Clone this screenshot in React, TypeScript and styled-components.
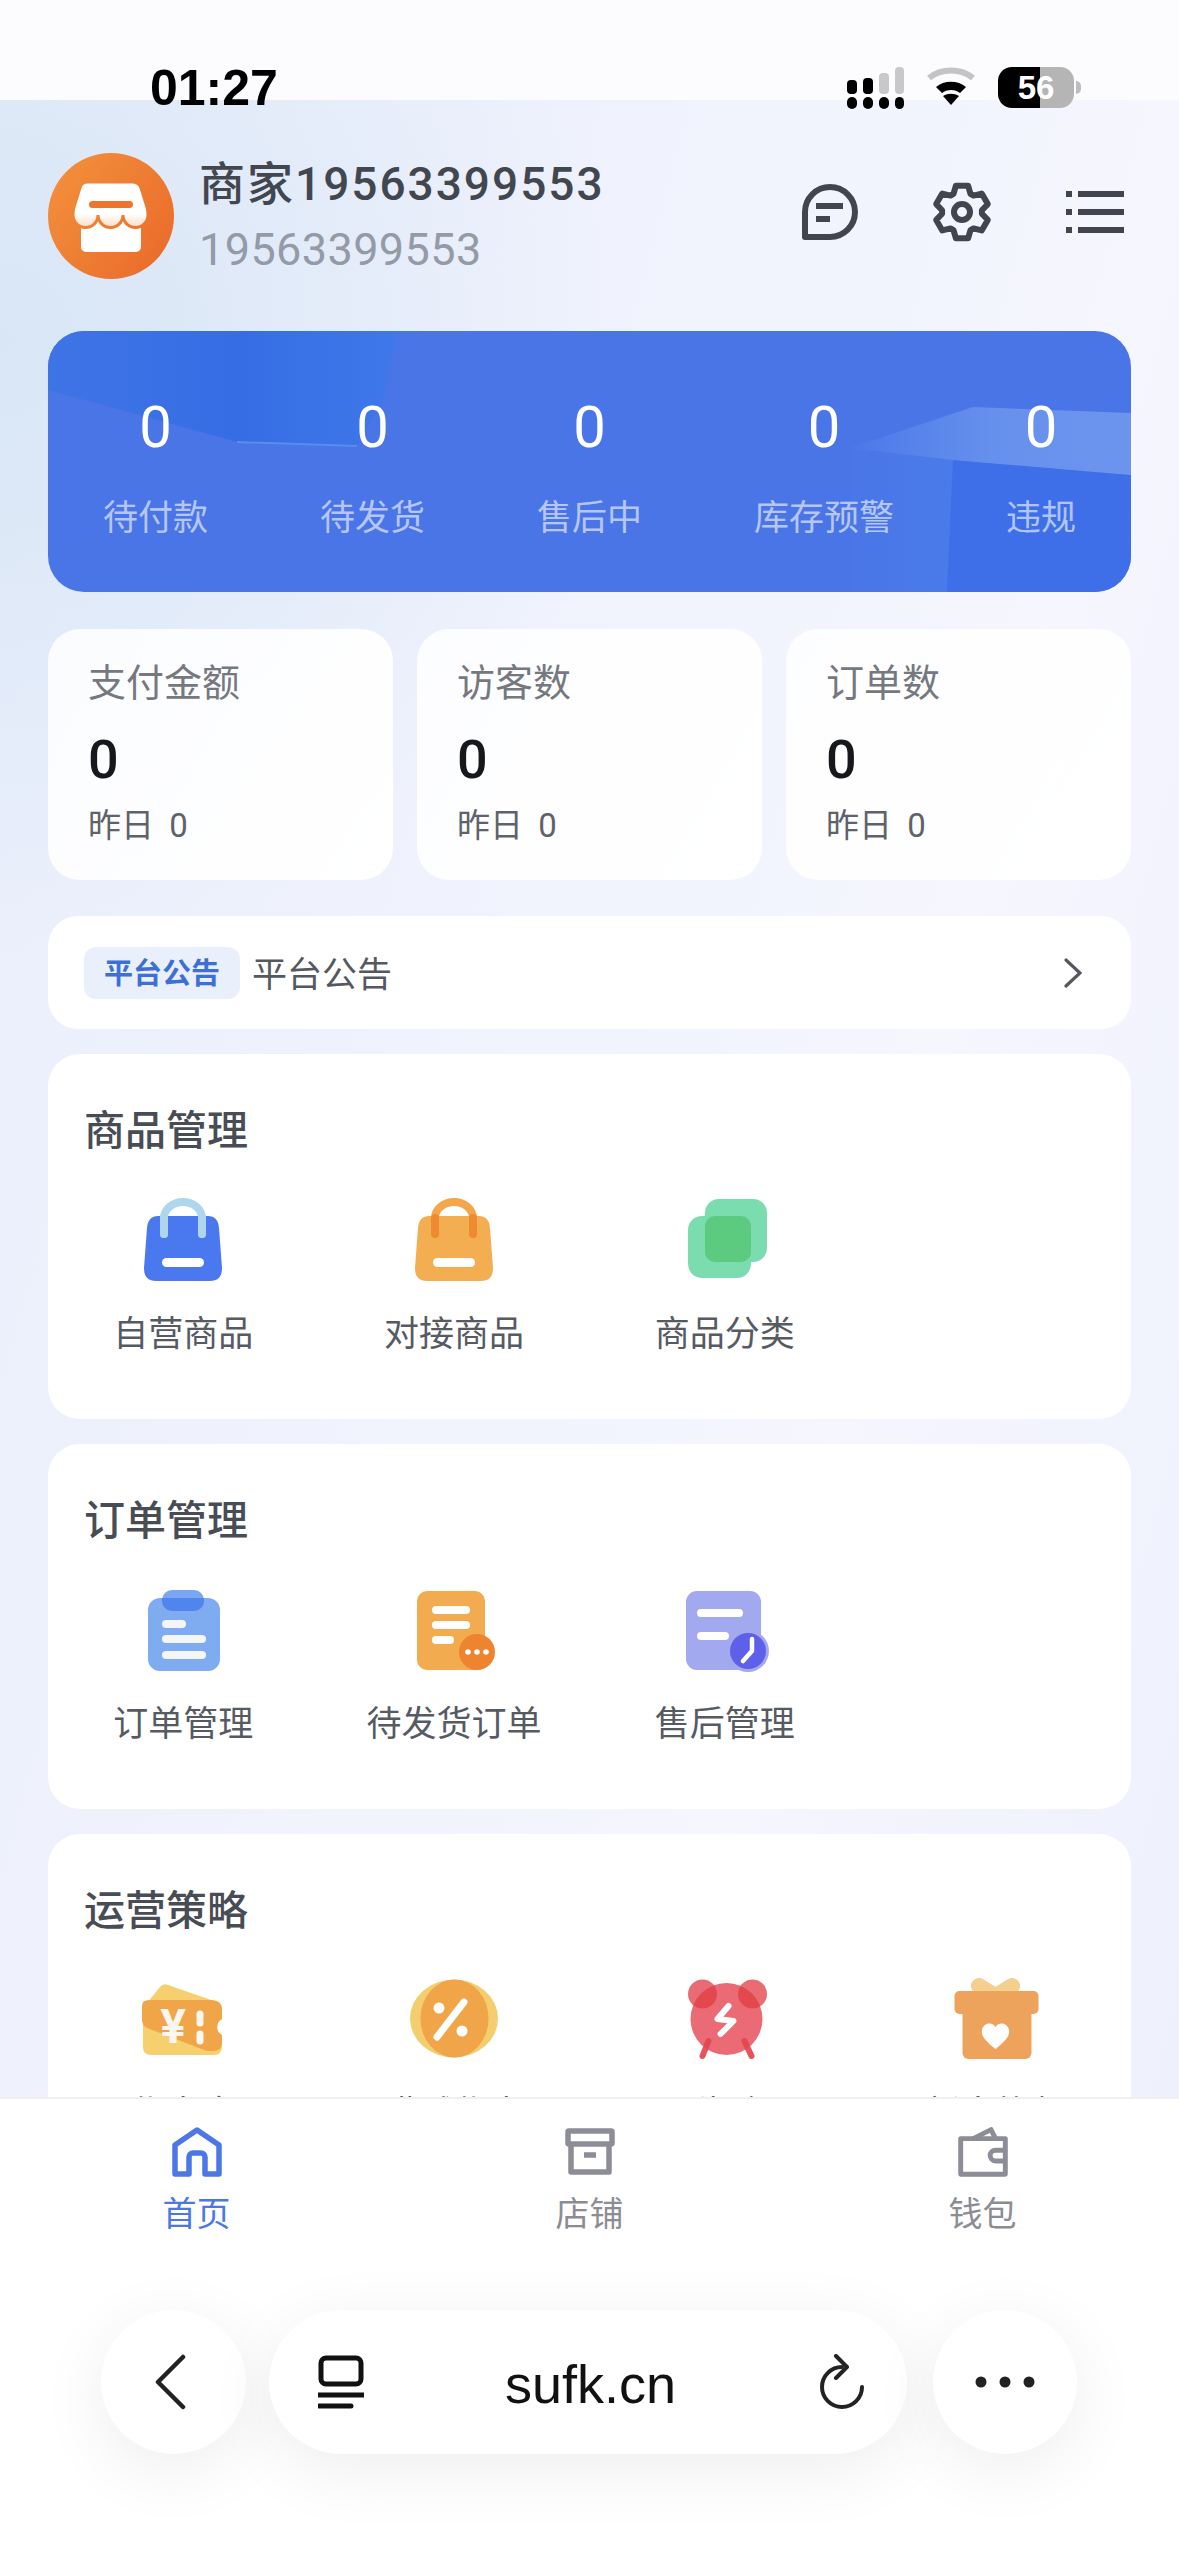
import React from 'react';
import styled, { createGlobalStyle } from 'styled-components';

const GlobalStyle = createGlobalStyle`
  html, body {
    margin: 0;
    padding: 0;
    background: #fff;
  }
  * {
    box-sizing: border-box;
  }
`;

const Page = styled.div`
  width: 1179px;
  height: 2556px;
  display: flex;
  flex-direction: column;
  overflow: hidden;
  font-family: Roboto, 'Noto Sans CJK SC', sans-serif;
`;

const Scroller = styled.div`
  height: 2097px;
  flex-shrink: 0;
  overflow: hidden;
  padding: 0 48px;
  background:
    linear-gradient(#fcfcfe 100px, transparent 100px),
    radial-gradient(ellipse 620px 620px at 0 340px, #d8e6f6, transparent),
    linear-gradient(105deg, #e9eefb, #f5f6fe 70%, #eef0fc);
`;

const StatusBar = styled.div`
  height: 153px;
  margin: 0 -48px;
  padding: 61px 105px 0 150px;
  display: flex;
  justify-content: space-between;
  align-items: flex-start;
`;

const Time = styled.div`
  font-family: 'Liberation Sans', sans-serif;
  font-size: 50px;
  line-height: 54px;
  font-weight: 700;
  color: #000;
`;

const StatusIcons = styled.div`
  display: flex;
  align-items: flex-start;
  gap: 22px;
  margin-top: 6px;
`;

const Battery = styled.div`
  width: 76px;
  height: 41px;
  border-radius: 14px;
  background: linear-gradient(90deg, #000 55%, #b5b5b5 55%);
  color: #fff;
  font-family: 'Liberation Sans', sans-serif;
  font-size: 33px;
  line-height: 41px;
  font-weight: 700;
  text-align: center;
  position: relative;

  &::after {
    content: '';
    position: absolute;
    right: -7px;
    top: 14px;
    width: 5px;
    height: 13px;
    border-radius: 0 6px 6px 0;
    background: #bdbdbd;
  }
`;

const Header = styled.div`
  display: flex;
  align-items: center;
  height: 126px;
`;

const Avatar = styled.svg`
  width: 126px;
  height: 126px;
  flex-shrink: 0;
`;

const Who = styled.div`
  margin-left: 25px;
  flex: 1;
`;

const Name = styled.div`
  font-size: 46px;
  line-height: 52px;
  font-weight: 500;
  letter-spacing: 2px;
  color: #42464f;
`;

const Phone = styled.div`
  margin-top: 15px;
  font-size: 45px;
  line-height: 50px;
  letter-spacing: 0.4px;
  color: #949aa6;
`;

const HeaderActions = styled.div`
  display: flex;
  align-items: center;
  gap: 74px;
  margin-right: 7px;
  padding-bottom: 9px;
`;

const BlueCard = styled.div`
  position: relative;
  margin-top: 52px;
  height: 261px;
  border-radius: 36px;
  overflow: hidden;
  background: #4a75e6;
`;

const BlueArt = styled.svg`
  position: absolute;
  inset: 0;
  width: 100%;
  height: 100%;
`;

const BlueRow = styled.div`
  position: relative;
  display: flex;
  justify-content: space-between;
  padding: 66px 55px 0;
`;

const BlueItem = styled.div`
  display: flex;
  flex-direction: column;
  align-items: center;
  gap: 37px;
`;

const BlueValue = styled.div`
  font-size: 58px;
  line-height: 60px;
  color: #fff;
`;

const BlueLabel = styled.div`
  font-size: 35px;
  line-height: 50px;
  color: rgba(255, 255, 255, 0.6);
`;

const StatGrid = styled.div`
  display: grid;
  grid-template-columns: repeat(3, 1fr);
  gap: 24px;
  margin-top: 37px;
`;

const StatCard = styled.div`
  height: 251px;
  padding: 29px 0 0 40px;
  border-radius: 32px;
  background: linear-gradient(120deg, rgba(255, 255, 255, 0.86), rgba(255, 255, 255, 0.98));
`;

const StatLabel = styled.div`
  font-size: 38px;
  line-height: 50px;
  color: #75787f;
`;

const StatValue = styled.div`
  margin-top: 22px;
  font-size: 54px;
  line-height: 60px;
  font-weight: 500;
  color: #17181c;
`;

const StatSub = styled.div`
  margin-top: 14px;
  font-size: 33px;
  line-height: 44px;
  word-spacing: 7px;
  color: #5f626a;
`;

const Notice = styled.div`
  margin-top: 36px;
  height: 113px;
  padding: 0 49px 0 36px;
  display: flex;
  align-items: center;
  border-radius: 30px;
  background: #fff;
`;

const NoticeTag = styled.div`
  width: 156px;
  height: 52px;
  border-radius: 12px;
  background: #e9f0fc;
  color: #3d6fd6;
  font-size: 29px;
  line-height: 54px;
  font-weight: 700;
  text-align: center;
`;

const NoticeText = styled.div`
  flex: 1;
  margin: -3px 0 0 12px;
  font-size: 35px;
  color: #55585f;
`;

const Section = styled.section`
  margin-top: 25px;
  padding: 52px 0 59px;
  border-radius: 32px;
  background: #fff;
`;

const SectionTitle = styled.h2`
  margin: 0 0 42px 36px;
  font-size: 41px;
  line-height: 50px;
  font-weight: 500;
  color: #484c55;
`;

const ItemGrid = styled.div`
  display: grid;
  grid-template-columns: repeat(4, 1fr);
`;

const Item = styled.div`
  display: flex;
  flex-direction: column;
  align-items: center;
  gap: 28px;
`;

const ItemIcon = styled.svg`
  width: 84px;
  height: 84px;
  overflow: visible;
`;

const ItemLabel = styled.div`
  font-size: 35px;
  line-height: 50px;
  color: #565a63;
`;

const BottomArea = styled.div`
  flex: 1;
  background: #fff;
  border-top: 2px solid #f0f0f3;
`;

const Tabs = styled.div`
  display: grid;
  grid-template-columns: repeat(3, 1fr);
  padding-top: 28px;
`;

const Tab = styled.div`
  display: flex;
  flex-direction: column;
  align-items: center;
  gap: 15px;
`;

const TabLabel = styled.div<{ $active?: boolean }>`
  font-size: 34px;
  line-height: 44px;
  color: ${({ $active }) => ($active ? '#4b78e6' : '#8c8d94')};
`;

const Toolbar = styled.div`
  display: flex;
  align-items: center;
  margin-top: 74px;
  padding-left: 101px;
`;

const RoundButton = styled.div`
  width: 144px;
  height: 144px;
  flex-shrink: 0;
  border-radius: 50%;
  background: #fff;
  display: flex;
  align-items: center;
  justify-content: center;
  box-shadow: 0 16px 70px rgba(0, 0, 0, 0.07);
`;

const BackButton = styled(RoundButton)`
  width: 145px;
  padding-right: 8px;
`;

const UrlPill = styled.div`
  width: 638px;
  height: 144px;
  margin: 0 26px 0 23px;
  padding: 0 42px 0 49px;
  border-radius: 72px;
  background: #fff;
  display: flex;
  align-items: center;
  justify-content: space-between;
  box-shadow: 0 16px 70px rgba(0, 0, 0, 0.07);
`;

const Url = styled.div`
  font-family: 'Liberation Sans', sans-serif;
  font-size: 54px;
  color: #111;
  padding: 4px 2px 0 0;
`;

const INK = '#42454f';

// six lobed cog, the packages only have the eight tooth one
const cogPoints = () => {
  const pts: string[] = [];
  for (let i = 0; i < 6; i++) {
    const a = -90 + i * 60;
    [
      [a - 13, 27],
      [a + 13, 27],
      [a + 25, 20],
      [a + 35, 20],
    ].forEach(([deg, r]) => {
      const rad = (deg * Math.PI) / 180;
      pts.push(`${(30 + r * Math.cos(rad)).toFixed(1)},${(30 + r * Math.sin(rad)).toFixed(1)}`);
    });
  }
  return pts.join(' ');
};

const SignalIcon = () => (
  <svg width="58" height="42" viewBox="0 0 58 42">
    <rect x="1" y="30" width="10" height="12" rx="5" fill="#000" />
    <rect x="17" y="30" width="10" height="12" rx="5" fill="#000" />
    <rect x="33" y="30" width="10" height="12" rx="5" fill="#000" />
    <rect x="49" y="30" width="9" height="12" rx="4.5" fill="#000" />
    <rect x="1" y="13" width="10" height="14" rx="4" fill="#000" />
    <rect x="17" y="11" width="10" height="16" rx="4" fill="#000" />
    <rect x="33" y="6" width="10" height="21" rx="4" fill="#c8c8c8" />
    <rect x="49" y="0" width="9" height="27" rx="4" fill="#c8c8c8" />
  </svg>
);

const WifiIcon = () => (
  <svg width="50" height="38" viewBox="0 0 50 38">
    <path d="M3 11 C15 1 35 1 47 11" fill="none" stroke="#c4c4c4" strokeWidth="6" />
    <path d="M10 20 C18 13 32 13 40 20 L34 26 C29 22 21 22 16 26 Z" fill="#000" />
    <path d="M25 38 L17 29 C22 26 28 26 33 29 Z" fill="#000" />
  </svg>
);

const StoreAvatar = () => (
  <Avatar viewBox="0 0 126 126">
    <defs>
      <linearGradient id="avatarBg" gradientUnits="userSpaceOnUse" x1="0" y1="20" x2="126" y2="110">
        <stop offset="0" stopColor="#f2903c" />
        <stop offset="1" stopColor="#ea6a2a" />
      </linearGradient>
      <linearGradient id="awning" x1="0" y1="0" x2="0" y2="1">
        <stop offset="0" stopColor="#fff" />
        <stop offset="0.7" stopColor="#fff" />
        <stop offset="1" stopColor="#fcdcc3" />
      </linearGradient>
    </defs>
    <circle cx="63" cy="63" r="63" fill="url(#avatarBg)" />
    <rect x="33" y="66" width="60" height="33" rx="5" fill="#fff" />
    <path
      d="M40 29 H84 Q91 29 93 35 L99 54 Q100 58 100 62 A12.5 12.5 0 0 1 75 62 A12.5 12.5 0 0 1 50 62 A12.5 12.5 0 0 1 25 62 Q25 58 26 54 L32 35 Q33 29 40 29 Z"
      fill="url(#awning)"
      stroke="url(#avatarBg)"
      strokeWidth="3"
    />
    <rect x="41" y="48" width="44" height="7" rx="3.5" fill="#ec7530" />
  </Avatar>
);

const MessageIcon = () => (
  <svg width="56" height="56" viewBox="0 0 56 56" fill="none" stroke={INK} strokeWidth="6">
    <path d="M3 53 V28 A25 25 0 1 1 28 53 Z" strokeLinejoin="round" />
    <path d="M14 22 H41 M14 35 H28" />
  </svg>
);

const CogIcon = () => (
  <svg width="60" height="60" viewBox="0 0 60 60" fill="none" stroke={INK} strokeWidth="6" strokeLinejoin="round">
    <polygon points={cogPoints()} />
    <circle cx="30" cy="30" r="8" />
  </svg>
);

const ListIcon = () => (
  <svg width="58" height="42" viewBox="0 0 58 42" fill={INK}>
    <rect x="0" y="0" width="6" height="6" />
    <rect x="12" y="0" width="46" height="6" />
    <rect x="0" y="18" width="6" height="6" />
    <rect x="12" y="18" width="46" height="6" />
    <rect x="0" y="36" width="6" height="6" />
    <rect x="12" y="36" width="46" height="6" />
  </svg>
);

const Chevron = () => (
  <svg width="18" height="30" viewBox="0 0 18 30" fill="none" stroke="#54575e" strokeWidth="3.2" strokeLinecap="round">
    <path d="M2 2 L16 15 L2 28" />
  </svg>
);

const BAG_BODY = 'M17 18 H67 Q77 18 78 30 L81 70 Q81 83 69 83 H15 Q3 83 3 70 L6 30 Q7 18 17 18 Z';

const BagIcon: React.FC<{ body: string; handle: string; inner: string }> = ({ body, handle, inner }) => (
  <ItemIcon viewBox="0 0 84 84">
    <path d={BAG_BODY} fill={body} />
    <path d="M23 36 V20 A19 16 0 0 1 61 20 V36" fill="none" stroke={handle} strokeWidth="8" strokeLinecap="round" />
    <path d="M23 36 V20 M61 36 V20" fill="none" stroke={inner} strokeWidth="8" strokeLinecap="round" />
    <rect x="21" y="60" width="42" height="9" rx="4.5" fill="#fff" />
  </ItemIcon>
);

const CategoryIcon = () => (
  <ItemIcon viewBox="0 0 84 84">
    <rect x="22" y="1" width="62" height="63" rx="14" fill="#7bdcaf" />
    <rect x="5" y="18" width="63" height="62" rx="14" fill="#7bdcaf" />
    <rect x="22" y="18" width="46" height="46" rx="10" fill="#5ccb80" />
  </ItemIcon>
);

const ClipboardIcon = () => (
  <ItemIcon viewBox="0 0 84 84">
    <rect x="7" y="10" width="72" height="73" rx="12" fill="#7fabf0" />
    <rect x="21" y="2" width="42" height="21" rx="10" fill="#78a6f2" />
    <path d="M21 10 H63 V13 A10 10 0 0 1 53 23 H31 A10 10 0 0 1 21 13 Z" fill="#4f85ec" />
    <rect x="21" y="32" width="24" height="8" rx="4" fill="#f3f5f8" />
    <rect x="21" y="47" width="44" height="8" rx="4" fill="#f3f5f8" />
    <rect x="21" y="63" width="44" height="8" rx="4" fill="#f3f5f8" />
  </ItemIcon>
);

const PendingIcon = () => (
  <ItemIcon viewBox="0 0 84 84">
    <rect x="5" y="3" width="68" height="79" rx="10" fill="#f3ab50" />
    <rect x="20" y="18" width="38" height="8" rx="4" fill="#fff" />
    <rect x="20" y="33" width="38" height="8" rx="4" fill="#fff" />
    <rect x="20" y="48" width="22" height="8" rx="4" fill="#fff" />
    <circle cx="65" cy="64" r="18" fill="#ee8330" />
    <circle cx="56" cy="64" r="2.8" fill="#fff" />
    <circle cx="65" cy="64" r="2.8" fill="#fff" />
    <circle cx="74" cy="64" r="2.8" fill="#fff" />
  </ItemIcon>
);

const AfterSaleIcon = () => (
  <ItemIcon viewBox="0 0 84 84">
    <rect x="3" y="3" width="75" height="79" rx="11" fill="#a3a9ee" />
    <rect x="14" y="21" width="46" height="8" rx="4" fill="#fff" />
    <rect x="14" y="44" width="32" height="8" rx="4" fill="#fff" />
    <circle cx="65" cy="63" r="21" fill="#a3a9ee" />
    <circle cx="65" cy="63" r="18" fill="#5f60ea" />
    <path d="M69 51 V63 L60 73" fill="none" stroke="#fff" strokeWidth="4.5" strokeLinecap="round" strokeLinejoin="round" />
  </ItemIcon>
);

const TicketIcon = () => (
  <ItemIcon viewBox="0 0 84 84">
    <path
      d="M19 9 Q22 5 27 7 L76 24 Q81 26 81 30 V41 A9 9 0 0 0 81 57 V68 Q81 77 73 77 H10 Q2 77 2 69 V30 Z"
      fill="#f6cf6e"
    />
    <path
      d="M8 22 H70 Q81 22 81 32 V41 A9 9 0 0 0 81 57 V64 Q81 74 70 73 L66 73 L6 50 Q1 47 1 42 V28 Q1 22 8 22 Z"
      fill="#f0a548"
    />
    <text x="32" y="65" textAnchor="middle" fontFamily="Roboto, sans-serif" fontSize="48" fontWeight="700" fill="#fbf7f0">
      ¥
    </text>
    <path d="M59 36 V45 M59 56 V63" stroke="#fbf7f0" strokeWidth="7" strokeLinecap="round" />
  </ItemIcon>
);

const CoinIcon = () => (
  <ItemIcon viewBox="0 0 84 84">
    <ellipse cx="42" cy="40.5" rx="44" ry="39" fill="#f3cd6e" />
    <ellipse cx="42.5" cy="40.5" rx="34" ry="39" fill="#efa548" />
    <path d="M25 59 L52 24" stroke="#fff" strokeWidth="7" strokeLinecap="round" />
    <circle cx="27" cy="30" r="5.5" fill="#fff" />
    <circle cx="50" cy="53" r="5.5" fill="#fff" />
  </ItemIcon>
);

const AlarmIcon = () => (
  <ItemIcon viewBox="0 0 84 84">
    <defs>
      <clipPath id="alarmBody">
        <circle cx="43.5" cy="41" r="36" />
      </clipPath>
    </defs>
    <path d="M25.5 63 L19.5 78 M61.5 63 L68.5 78" stroke="#e6535c" strokeWidth="6" strokeLinecap="round" />
    <circle cx="19.5" cy="16" r="14.5" fill="#e96b73" />
    <circle cx="69.5" cy="16" r="14.5" fill="#e96b73" />
    <circle cx="43.5" cy="41" r="36" fill="#ea6b76" />
    <g clipPath="url(#alarmBody)">
      <circle cx="19.5" cy="16" r="14.5" fill="#e4484f" />
      <circle cx="69.5" cy="16" r="14.5" fill="#e4484f" />
      <path d="M25.5 63 L19.5 78 M61.5 63 L68.5 78" stroke="#e4484f" strokeWidth="6" strokeLinecap="round" />
    </g>
    <path
      d="M45.5 28 L34.5 41 L50.5 43 L37.5 56"
      fill="none"
      stroke="#fff"
      strokeWidth="6"
      strokeLinecap="round"
      strokeLinejoin="round"
    />
  </ItemIcon>
);

const GiftIcon = () => (
  <ItemIcon viewBox="0 0 84 84">
    <path d="M25 8 L38 16 M58 8 L45 16" stroke="#f4cf8f" strokeWidth="16" strokeLinecap="round" />
    <rect x="8.5" y="30" width="69" height="51" rx="6" fill="#eea35d" />
    <rect x="0.5" y="13" width="84" height="23" rx="5" fill="#eea35d" />
    <path d="M41.5 71 C30 62 27 57 28 52 C29 45 38 43 41.5 49 C45 43 54 45 55 52 C56 57 53 62 41.5 71 Z" fill="#fff" />
  </ItemIcon>
);

const HomeIcon = () => (
  <svg width="50" height="50" viewBox="0 0 50 50" fill="none" stroke="#4b78e6" strokeWidth="5.5" strokeLinejoin="round">
    <path d="M3 47 V18 L25 3 L47 18 V47 H33 V30 A4 4 0 0 0 29 26 H21 A4 4 0 0 0 17 30 V47 Z" />
  </svg>
);

const StoreIcon = () => (
  <svg width="50" height="50" viewBox="0 0 50 50" fill="none" stroke="#8c8d96" strokeWidth="5.5" strokeLinejoin="round">
    <rect x="3" y="4" width="44" height="13" rx="1" />
    <path d="M6 17 V45 H44 V17" />
    <path d="M19 28 H31" />
  </svg>
);

const WalletIcon = () => (
  <svg width="56" height="50" viewBox="0 0 56 56" fill="none" stroke="#8c8d96" strokeWidth="5.5" strokeLinejoin="round">
    <path d="M3 13 H53 V53 H3 Z" />
    <path d="M17 13 L37 3 L42 13" />
    <path d="M53 26 H42 A6 6 0 0 0 42 38 H53" />
  </svg>
);

const BackIcon = () => (
  <svg width="32" height="56" viewBox="0 0 32 56" fill="none" stroke="#222" strokeWidth="4.5" strokeLinecap="round" strokeLinejoin="round">
    <path d="M29 3 L4 28 L29 53" />
  </svg>
);

const TabsIcon = () => (
  <svg width="46" height="54" viewBox="0 0 46 54" fill="none" stroke="#111" strokeWidth="5">
    <rect x="3" y="3" width="40" height="26" rx="5" />
    <path d="M0 40 H46 M1 51 H33" strokeLinecap="round" />
  </svg>
);

const ReloadIcon = () => (
  <svg width="46" height="56" viewBox="0 0 46 56" fill="none" stroke="#222" strokeWidth="4" strokeLinecap="round" strokeLinejoin="round">
    <path d="M23 13 A20 20 0 1 0 43 33" />
    <path d="M17 2 L28 13 L17 24" />
  </svg>
);

const MoreIcon = () => (
  <svg width="60" height="12" viewBox="0 0 60 12" fill="#222">
    <circle cx="6" cy="6" r="5.5" />
    <circle cx="30" cy="6" r="5.5" />
    <circle cx="54" cy="6" r="5.5" />
  </svg>
);

const blueStats = ['待付款', '待发货', '售后中', '库存预警', '违规'];
const stats = ['支付金额', '访客数', '订单数'];

const App: React.FC = () => (
  <Page>
    <GlobalStyle />
    <Scroller>
      <StatusBar>
        <Time>01:27</Time>
        <StatusIcons>
          <SignalIcon />
          <WifiIcon />
          <Battery>56</Battery>
        </StatusIcons>
      </StatusBar>

      <Header>
        <StoreAvatar />
        <Who>
          <Name>商家19563399553</Name>
          <Phone>19563399553</Phone>
        </Who>
        <HeaderActions>
          <MessageIcon />
          <CogIcon />
          <ListIcon />
        </HeaderActions>
      </Header>

      <BlueCard>
        <BlueArt viewBox="0 0 1083 261" preserveAspectRatio="none">
          <defs>
            <linearGradient id="blueLeft" x1="0" y1="0" x2="1" y2="0">
              <stop offset="0" stopColor="#3f74e6" />
              <stop offset="0.55" stopColor="#366de5" />
              <stop offset="1" stopColor="#3f78ea" />
            </linearGradient>
            <linearGradient id="blueCube" x1="0" y1="0" x2="1" y2="0">
              <stop offset="0" stopColor="#4a78e8" />
              <stop offset="0.5" stopColor="#6690ed" />
              <stop offset="1" stopColor="#6c95ee" />
            </linearGradient>
            <linearGradient id="bluePanel" x1="0" y1="0" x2="1" y2="0">
              <stop offset="0" stopColor="#4a76e7" />
              <stop offset="1" stopColor="#4a7bea" />
            </linearGradient>
          </defs>
          <polygon points="0,0 350,0 335,71 309,115 189,111 0,59" fill="url(#blueLeft)" />
          <polyline points="189,111 309,115" fill="none" stroke="#5a8cee" strokeWidth="2" />
          <polygon points="802,117 905,129 899,261 802,261" fill="url(#bluePanel)" />
          <polygon points="905,129 1083,144 1083,261 899,261" fill="#3e6fe9" />
          <polygon points="802,117 925,76 1083,82 1083,144 905,129" fill="url(#blueCube)" />
        </BlueArt>
        <BlueRow>
          {blueStats.map((label) => (
            <BlueItem key={label}>
              <BlueValue>0</BlueValue>
              <BlueLabel>{label}</BlueLabel>
            </BlueItem>
          ))}
        </BlueRow>
      </BlueCard>

      <StatGrid>
        {stats.map((label) => (
          <StatCard key={label}>
            <StatLabel>{label}</StatLabel>
            <StatValue>0</StatValue>
            <StatSub>昨日 0</StatSub>
          </StatCard>
        ))}
      </StatGrid>

      <Notice>
        <NoticeTag>平台公告</NoticeTag>
        <NoticeText>平台公告</NoticeText>
        <Chevron />
      </Notice>

      <Section>
        <SectionTitle>商品管理</SectionTitle>
        <ItemGrid>
          <Item>
            <BagIcon body="#4a78ee" handle="#aed6ef" inner="#aed6ef" />
            <ItemLabel>自营商品</ItemLabel>
          </Item>
          <Item>
            <BagIcon body="#f4ae52" handle="#f3a64c" inner="#ee8a30" />
            <ItemLabel>对接商品</ItemLabel>
          </Item>
          <Item>
            <CategoryIcon />
            <ItemLabel>商品分类</ItemLabel>
          </Item>
        </ItemGrid>
      </Section>

      <Section>
        <SectionTitle>订单管理</SectionTitle>
        <ItemGrid>
          <Item>
            <ClipboardIcon />
            <ItemLabel>订单管理</ItemLabel>
          </Item>
          <Item>
            <PendingIcon />
            <ItemLabel>待发货订单</ItemLabel>
          </Item>
          <Item>
            <AfterSaleIcon />
            <ItemLabel>售后管理</ItemLabel>
          </Item>
        </ItemGrid>
      </Section>

      <Section>
        <SectionTitle>运营策略</SectionTitle>
        <ItemGrid>
          <Item>
            <TicketIcon />
            <ItemLabel>优惠券</ItemLabel>
          </Item>
          <Item>
            <CoinIcon />
            <ItemLabel>满减优惠</ItemLabel>
          </Item>
          <Item>
            <AlarmIcon />
            <ItemLabel>秒杀</ItemLabel>
          </Item>
          <Item>
            <GiftIcon />
            <ItemLabel>新人礼包</ItemLabel>
          </Item>
        </ItemGrid>
      </Section>
    </Scroller>

    <BottomArea>
      <Tabs>
        <Tab>
          <HomeIcon />
          <TabLabel $active>首页</TabLabel>
        </Tab>
        <Tab>
          <StoreIcon />
          <TabLabel>店铺</TabLabel>
        </Tab>
        <Tab>
          <WalletIcon />
          <TabLabel>钱包</TabLabel>
        </Tab>
      </Tabs>
      <Toolbar>
        <BackButton>
          <BackIcon />
        </BackButton>
        <UrlPill>
          <TabsIcon />
          <Url>sufk.cn</Url>
          <ReloadIcon />
        </UrlPill>
        <RoundButton>
          <MoreIcon />
        </RoundButton>
      </Toolbar>
    </BottomArea>
  </Page>
);

export default App;
